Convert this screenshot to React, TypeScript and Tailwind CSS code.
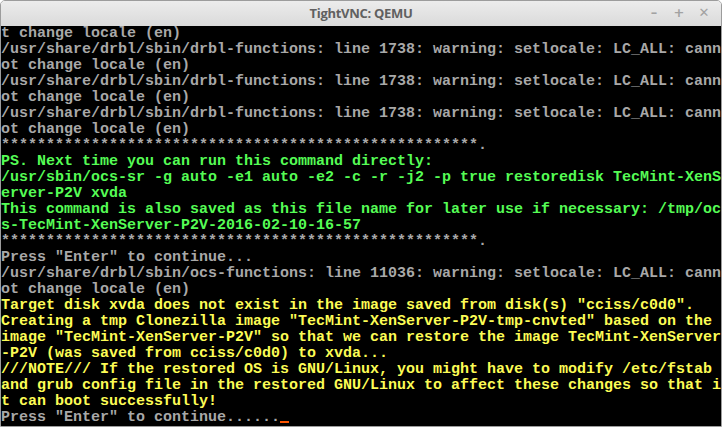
import { ReactNode } from "react";

type Line = { text: string; tone: "gray" | "green" | "yellow" };

const STARS = "*".repeat(53) + ".";

const lines: Line[] = [
  { text: "t change locale (en)", tone: "gray" },
  { text: "/usr/share/drbl/sbin/drbl-functions: line 1738: warning: setlocale: LC_ALL: cann", tone: "gray" },
  { text: "ot change locale (en)", tone: "gray" },
  { text: "/usr/share/drbl/sbin/drbl-functions: line 1738: warning: setlocale: LC_ALL: cann", tone: "gray" },
  { text: "ot change locale (en)", tone: "gray" },
  { text: "/usr/share/drbl/sbin/drbl-functions: line 1738: warning: setlocale: LC_ALL: cann", tone: "gray" },
  { text: "ot change locale (en)", tone: "gray" },
  { text: STARS, tone: "gray" },
  { text: "PS. Next time you can run this command directly:", tone: "green" },
  { text: "/usr/sbin/ocs-sr -g auto -e1 auto -e2 -c -r -j2 -p true restoredisk TecMint-XenS", tone: "green" },
  { text: "erver-P2V xvda", tone: "green" },
  { text: "This command is also saved as this file name for later use if necessary: /tmp/oc", tone: "green" },
  { text: "s-TecMint-XenServer-P2V-2016-02-10-16-57", tone: "green" },
  { text: STARS, tone: "gray" },
  { text: 'Press "Enter" to continue...', tone: "gray" },
  { text: "/usr/share/drbl/sbin/ocs-functions: line 11036: warning: setlocale: LC_ALL: cann", tone: "gray" },
  { text: "ot change locale (en)", tone: "gray" },
  { text: 'Target disk xvda does not exist in the image saved from disk(s) "cciss/c0d0".', tone: "yellow" },
  { text: 'Creating a tmp Clonezilla image "TecMint-XenServer-P2V-tmp-cnvted" based on the', tone: "yellow" },
  { text: 'image "TecMint-XenServer-P2V" so that we can restore the image TecMint-XenServer', tone: "yellow" },
  { text: "-P2V (was saved from cciss/c0d0) to xvda...", tone: "yellow" },
  { text: "///NOTE/// If the restored OS is GNU/Linux, you might have to modify /etc/fstab", tone: "yellow" },
  { text: "and grub config file in the restored GNU/Linux to affect these changes so that i", tone: "yellow" },
  { text: "t can boot successfully!", tone: "yellow" },
];

const toneClass = {
  gray: "text-[#a8a8a8]",
  green: "text-[#55fc55]",
  yellow: "text-[#fcfc55]",
};

function TermLine({ children, className }: { children: ReactNode; className: string }) {
  return <div className={`h-4 whitespace-pre ${className}`}>{children}</div>;
}

export default function App() {
  return (
    <div className="w-[722px] h-[427px] overflow-hidden bg-white">
      <div className="flex flex-col h-full rounded-t-[5px] border border-[#9c9c9c] overflow-hidden">
        {/* title bar */}
        <div className="relative h-[25px] shrink-0 flex items-center justify-center bg-gradient-to-b from-[#ececec] to-[#dadada]">
          <span className="font-['Open_Sans',sans-serif] font-bold text-[13px] text-[#606060] tracking-[-0.3px]">
            TightVNC: QEMU
          </span>
          <div className="absolute right-[11px] top-[5px] flex items-center gap-[13px] text-[#a2a2a2] font-['DejaVu_Sans',sans-serif] font-bold text-[13px] leading-none">
            <span className="w-3 text-center">–</span>
            <span className="w-3 text-center">+</span>
            <span className="w-3 text-center">✕</span>
          </div>
        </div>

        {/* VNC framebuffer */}
        <div className="flex-1 bg-black font-['Liberation_Mono',monospace] text-[15px] leading-4 font-bold">
          {lines.map((l, i) => (
            <TermLine key={i} className={toneClass[l.tone]}>
              {l.text}
            </TermLine>
          ))}
          <TermLine className={toneClass.gray}>
            Press "Enter" to continue......
            <span className="inline-block w-[9px] h-[2px] bg-[#fc5400] align-[-2px]" />
          </TermLine>
        </div>
      </div>
    </div>
  );
}
